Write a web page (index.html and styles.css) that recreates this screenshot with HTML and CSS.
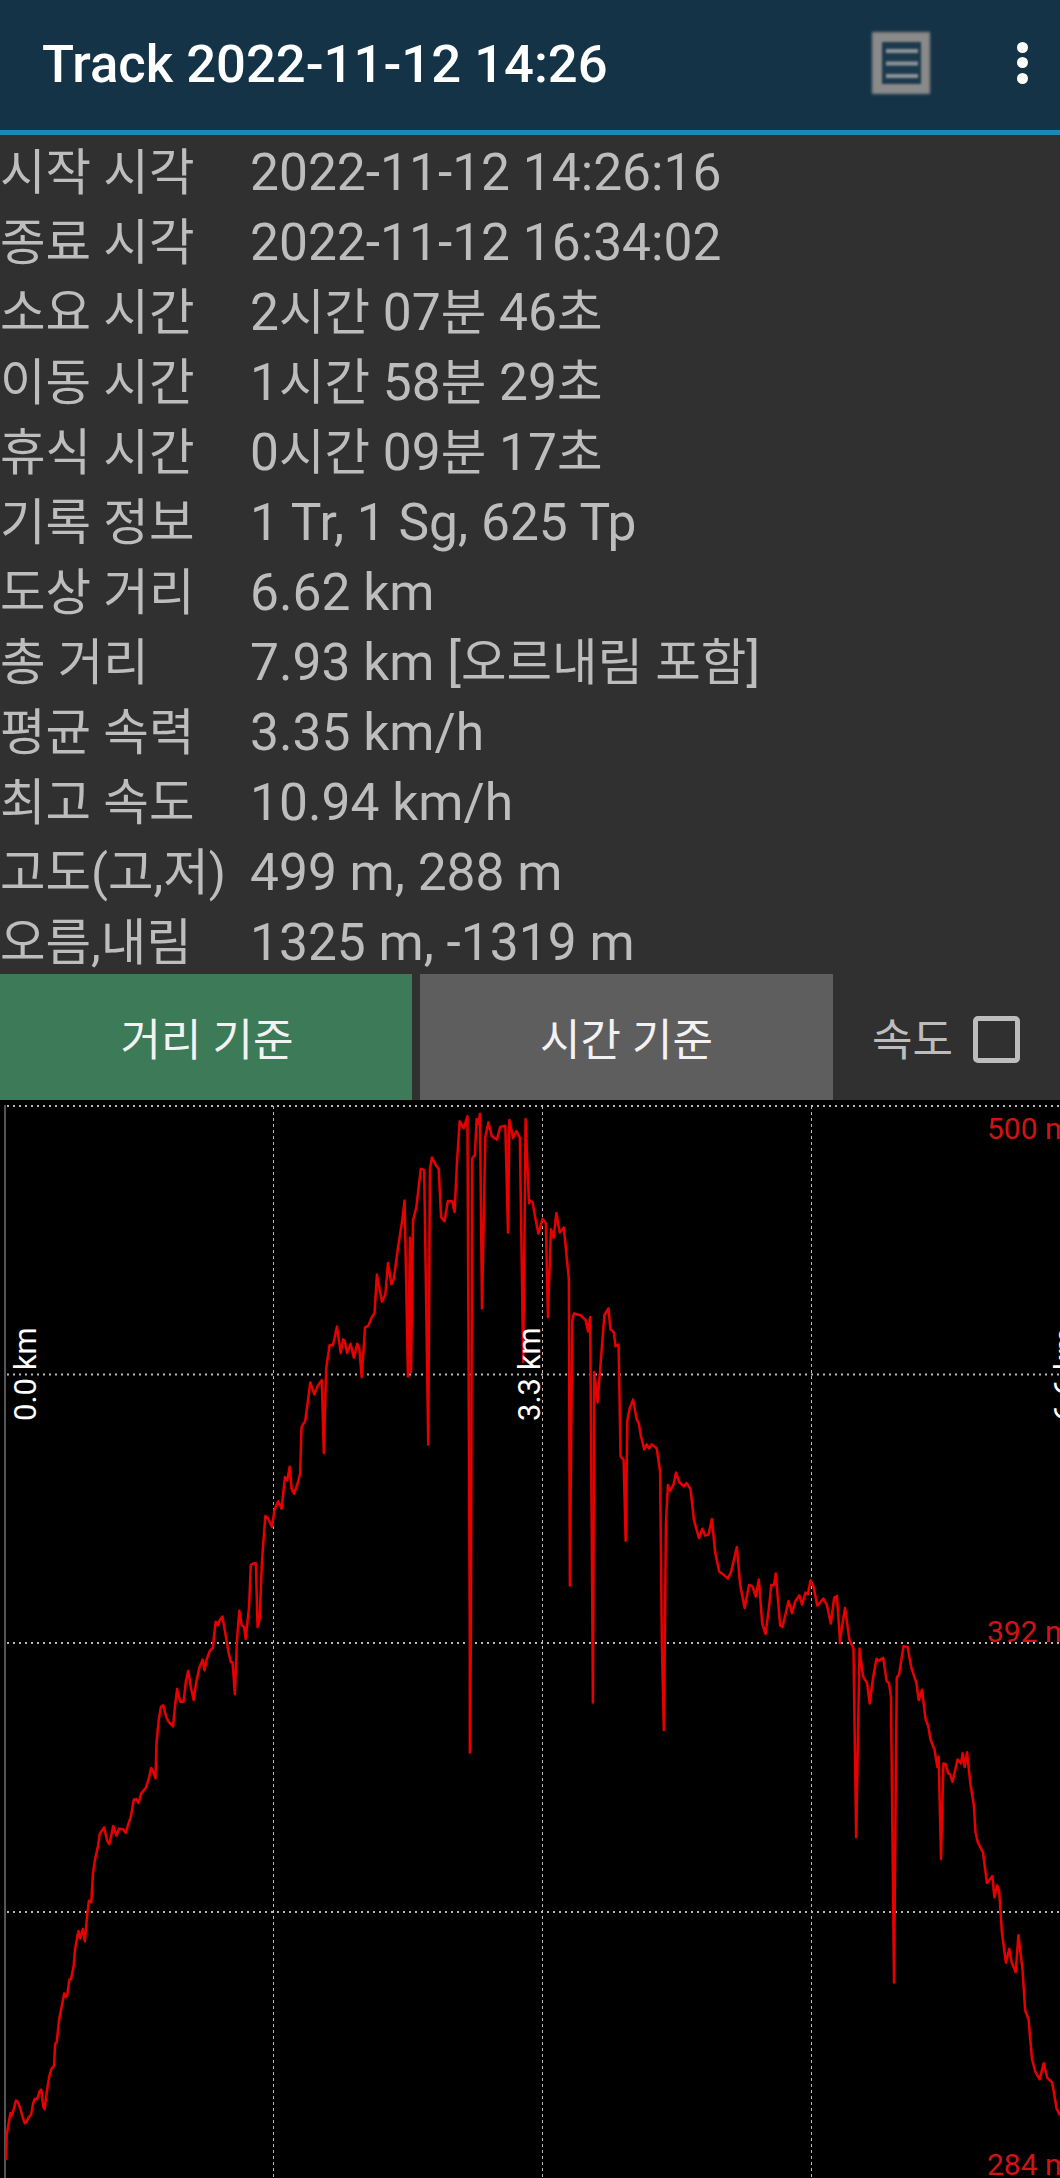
FILE: index.html
```html
<!DOCTYPE html>
<html>
<head>
    <title>Track 2022-11-12 14:26</title>
    <link rel="stylesheet" href="styles.css">
</head>
<body>
    <header class="appbar">
        <div class="appbar-title">Track 2022-11-12 14:26</div>
        <svg class="list-icon" width="70" height="74" viewBox="0 0 70 74">
            <rect class="list-icon-frame" x="6" y="6" width="58" height="62"/>
            <rect class="list-icon-inner" x="16" y="16" width="39" height="42"/>
            <path class="list-icon-bars" d="M20 25h32M20 37.5h32M20 50h32"/>
        </svg>
        <div class="overflow">
            <span class="dot"></span>
            <span class="dot"></span>
            <span class="dot"></span>
        </div>
    </header>

    <div class="info">
        <div class="info-row"><span class="info-label ko">시작 시각</span><span>2022-11-12 14:26:16</span></div>
        <div class="info-row"><span class="info-label ko">종료 시각</span><span>2022-11-12 16:34:02</span></div>
        <div class="info-row"><span class="info-label ko">소요 시간</span><span>2<span class="ko">시간</span> 07<span class="ko">분</span> 46<span class="ko">초</span></span></div>
        <div class="info-row"><span class="info-label ko">이동 시간</span><span>1<span class="ko">시간</span> 58<span class="ko">분</span> 29<span class="ko">초</span></span></div>
        <div class="info-row"><span class="info-label ko">휴식 시간</span><span>0<span class="ko">시간</span> 09<span class="ko">분</span> 17<span class="ko">초</span></span></div>
        <div class="info-row"><span class="info-label ko">기록 정보</span><span>1 Tr, 1 Sg, 625 Tp</span></div>
        <div class="info-row"><span class="info-label ko">도상 거리</span><span>6.62 km</span></div>
        <div class="info-row"><span class="info-label ko">총 거리</span><span>7.93 km [<span class="ko">오르내림 포함</span>]</span></div>
        <div class="info-row"><span class="info-label ko">평균 속력</span><span>3.35 km/h</span></div>
        <div class="info-row"><span class="info-label ko">최고 속도</span><span>10.94 km/h</span></div>
        <div class="info-row"><span class="info-label ko">고도(고,저)</span><span>499 m, 288 m</span></div>
        <div class="info-row"><span class="info-label ko">오름,내림</span><span>1325 m, -1319 m</span></div>
    </div>

    <div class="controls">
        <div class="btn btn-distance">거리 기준</div>
        <div class="btn btn-time">시간 기준</div>
        <div class="speed">
            <span>속도</span>
            <span class="checkbox"></span>
        </div>
    </div>

    <svg class="chart" width="1060" height="1078" viewBox="0 1100 1060 1078">
        <path class="axis" d="M5 1105V2178"/>
        <path class="grid" d="M7 1106H1060M7 1374.5H1060M7 1643H1060M7 1912H1060"/>
        <path class="grid" d="M273.500 1106V2178M542.500 1106V2178M811.500 1106V2178"/>

        <g class="trace" transform="translate(0 1640) scale(.338 .3432)">
            <polyline points="18,1515 20,1440 27,1400 31,1378 35,1385 40,1370 47,1342 52,1345 60,1365 67,1390 73,1408 78,1406 85,1390 92,1383 98,1350 103,1337 110,1338 117,1315 122,1310 128,1360 132,1367 138,1320 145,1275 152,1250 160,1240 163,1178 168,1170 175,1105 182,1070 190,1030 195,1040 199,1035 205,990 210,988 218,950 222,900 232,848 237,870 245,842 251,878 258,800 263,760 270,765 275,680 281,640 290,600 295,565 308,546 317,585 323,595 328,575 335,542 345,570 352,550 365,552 372,562 380,535 387,515 396,465 403,463 410,475 418,447 432,430 440,405 447,373 452,380 460,403 463,300 470,230 476,195 483,190 492,225 500,240 512,252 518,190 524,143 533,180 543,180 550,120 557,90 565,140 573,175 580,125 590,80 600,57 605,88 612,55 620,33 630,22 632,0"/>
            <polyline points="670,0 676,35 683,65 688,65 695,158 701,0"/>
            <polyline points="1390,0 1390,328 1393,0"/>
        </g>
        <g class="trace" transform="translate(0 1100) scale(.338 .3444)">
            <polyline points="632,1568 638,1515 645,1525 650,1510 658,1500 665,1540 670,1568"/>
            <polyline points="701,1568 708,1483 715,1525 722,1530 727,1565 737,1470 742,1350 750,1345 757,1345 762,1530 768,1510 775,1340 785,1208 793,1215 805,1240 812,1190 823,1165 833,1187 843,1095 850,1105 857,1065 863,1130 870,1143 880,1115 888,1085 892,950 903,932 910,880 918,820 930,855 940,830 952,813 958,1025 965,780 975,712 985,712 997,658 1008,735 1015,695 1020,700 1027,735 1037,708 1047,748 1057,708 1063,720 1070,805 1080,660 1090,655 1100,630 1108,620 1115,507 1130,585 1140,565 1148,473 1158,535 1165,520 1178,425 1190,350 1197,292 1207,803 1213,400 1216,790 1222,350 1232,310 1245,200 1255,203 1267,1000 1272,200 1278,167 1290,190 1298,200 1305,340 1315,352 1325,293 1338,295 1345,325 1352,180 1360,62 1372,82 1383,47 1390,1568"/>
            <polyline points="1393,1568 1397,170 1405,160 1410,55 1415,70 1420,40 1426,605 1436,105 1445,65 1455,105 1470,115 1480,78 1495,75 1503,385 1507,58 1518,110 1528,90 1538,110 1548,760 1555,55 1565,300 1568,290"/>
        </g>
        <g class="trace" transform="translate(530 1100) scale(.338 .3444)">
            <polyline points="0,290 8,298 15,340 25,388 37,345 47,358 53,630 62,375 70,400 78,328 88,385 100,370 107,440 115,520 118,1410 125,640 130,620 150,625 165,640 172,672 178,630 185,1568"/>
            <polyline points="187,1568 190,790 200,878 210,750 220,625 232,605 238,665 248,675 253,715 262,710 268,1035 277,1045 283,1280 288,930 295,895 305,870 315,925 322,940 328,975 338,1015 345,1000 352,1012 360,1000 375,1012 385,1080 390,1568"/>
            <polyline points="399,1568 402,1230 408,1118 415,1135 425,1115 432,1082 442,1110 455,1122 463,1112 475,1130 485,1220 500,1272 510,1245 518,1265 528,1262 538,1217 548,1315 560,1370 575,1380 585,1390 595,1370 612,1298 622,1410 635,1475 648,1408 658,1412 668,1442 677,1392 687,1520 697,1550 708,1465 714,1408 722,1408 727,1375 740,1525 747,1530 765,1455 775,1490 785,1455 797,1438 805,1465 815,1430 822,1435 830,1395 838,1410 850,1468 868,1448 878,1465 890,1520 900,1445 908,1440 917,1568"/>
            <polyline points="917,1568 932,1475 945,1568"/>
        </g>
        <g class="trace" transform="translate(530 1640) scale(.338 .3432)">
            <polyline points="185,0 186,182 187,0"/>
            <polyline points="390,0 396,262 399,0"/>
            <polyline points="917,0 917,12"/>
            <polyline points="945,0 957,25 965,575 975,25 985,105 997,125 1005,185 1015,110 1025,55 1032,60 1045,52 1055,120 1062,125 1068,165 1077,998 1085,110 1092,100 1105,18 1117,20 1128,80 1143,125 1150,175 1160,145 1170,230 1178,250 1185,290 1197,320 1205,370 1209,340 1216,638 1223,360 1230,362 1237,388 1243,392 1250,413 1265,348 1275,360 1280,330 1286,370 1293,327 1303,420 1313,480 1318,560 1325,590 1340,618 1352,708 1368,688 1374,750 1382,715 1388,730 1396,850 1408,940 1418,900 1425,940 1437,968 1445,860 1457,960 1465,1080 1475,1105 1485,1220 1495,1258 1508,1280 1520,1233 1530,1275 1545,1290 1558,1365 1568,1385"/>
        </g>

        <text class="x-label" transform="translate(36 1421) rotate(-90)">0.0 km</text>
        <text class="x-label" transform="translate(540 1421) rotate(-90)">3.3 km</text>
        <text class="x-label" transform="translate(1076 1421) rotate(-90)">6.6 km</text>
        <text class="y-label" x="987" y="1139">500 m</text>
        <text class="y-label" x="987" y="1642">392 m</text>
        <text class="y-label" x="987" y="2175">284 m</text>
    </svg>
</body>
</html>
```

FILE: styles.css
```css
body {
    margin: 0;
    width: 1060px;
    height: 2178px;
    overflow: hidden;
    background-color: #303030;
    font-family: Roboto, "Noto Sans CJK KR", sans-serif;
}
.appbar {
    display: flex;
    align-items: center;
    height: 130px;
    background-color: #143347;
    border-bottom: 5px solid #1a8ab5;
}
.appbar-title {
    flex: 1;
    margin-top: -2px;
    padding-left: 42px;
    font-size: 52.600px;
    font-weight: 500;
    color: #ffffff;
}
.list-icon {
    margin-top: -5px;
}
.list-icon-frame {
    fill: #8a8a8a;
    filter: blur(1.400px);
}
.list-icon-inner {
    fill: #1d3a4d;
    filter: blur(1.200px);
}
.list-icon-bars {
    stroke: #8f9599;
    stroke-width: 4;
    fill: none;
    filter: blur(.8px);
}
.overflow {
    display: flex;
    flex-direction: column;
    gap: 4.500px;
    width: 11px;
    margin: -5px 32px 0 81px;
}
.dot {
    width: 11px;
    height: 11px;
    border-radius: 50%;
    background-color: #ffffff;
}
.info {
    box-sizing: border-box;
    height: 839px;
    padding-top: 2.500px;
    font-size: 51.500px;
    line-height: 70px;
    color: #bdbdbd;
}
.info-row {
    display: flex;
    height: 70px;
    white-space: nowrap;
}
.info-label {
    width: 250px;
    flex-shrink: 0;
}
.ko {
    font-size: 49.500px;
}
.controls {
    display: flex;
    height: 126px;
    font-size: 44px;
}
.btn {
    display: flex;
    align-items: center;
    justify-content: center;
    color: #f2f2f2;
}
.btn-distance {
    box-sizing: border-box;
    width: 412px;
    padding-left: 2px;
    background-color: #3c7a58;
}
.btn-time {
    width: 413px;
    margin-left: 8px;
    background-color: #5e5e5e;
}
.speed {
    display: flex;
    align-items: center;
    gap: 20px;
    margin-left: 39px;
    color: #bdbdbd;
}
.checkbox {
    box-sizing: border-box;
    width: 47px;
    height: 47px;
    margin-top: 5px;
    border: 5px solid #bdbdbd;
    border-radius: 5px;
}
.chart {
    display: block;
    background-color: #000000;
}
.axis {
    stroke: #555555;
    stroke-width: 2;
    fill: none;
}
.grid {
    stroke: #b8b8b8;
    stroke-width: 2;
    stroke-dasharray: 2 4;
    fill: none;
}
.grid + .grid {
    stroke-width: 1;
    stroke-dasharray: 3 3;
}
.trace polyline {
    fill: none;
    stroke: #e80000;
    stroke-width: 2.500;
    stroke-linejoin: round;
    vector-effect: non-scaling-stroke;
}
.x-label {
    font-size: 31px;
    fill: #ffffff;
}
.y-label {
    font-size: 30px;
    fill: #d01414;
}
```
